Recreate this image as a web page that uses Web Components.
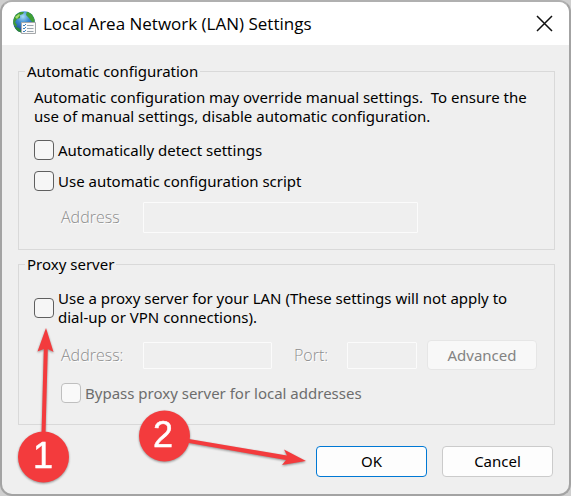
<!DOCTYPE html>
<html lang="en">
<head>
<meta charset="utf-8">
<title>Local Area Network (LAN) Settings</title>
<style>
  body {
    margin: 0;
    background: #cfcfcf;
    font: 15px/19px "Noto Sans", "Open Sans", sans-serif;
    color: #000;
  }

  .stack {
    display: flex;
    flex-direction: column;
    gap: 11px;
    align-items: flex-start;
  }

  .proxy {
    gap: 13px;
    padding: 8px 0 5px;
  }

  .note {
    margin: 0 0 3px;
  }

  .indent {
    display: flex;
    align-items: center;
    align-self: stretch;
    padding-left: 27px;
  }
</style>
</head>
<body>

<dialog-window>
  <network-icon slot="icon"></network-icon>
  <span slot="title">Local Area Network (LAN) Settings</span>

  <group-box>
    <span slot="legend">Automatic configuration</span>
    <div class="stack">
      <p class="note">Automatic configuration may override manual settings.&nbsp; To ensure the<br>use of manual settings, disable automatic configuration.</p>
      <check-option>Automatically detect settings</check-option>
      <check-option>Use automatic configuration script</check-option>
      <div class="indent">
        <text-field style="--label-width: 82px; --field-width: 275px; --field-height: 31px">Address</text-field>
      </div>
    </div>
  </group-box>

  <group-box>
    <span slot="legend">Proxy server</span>
    <div class="stack proxy">
      <check-option>Use a proxy server for your LAN (These settings will not apply to<br>dial-up or VPN connections).</check-option>
      <div class="indent" style="gap: 10px">
        <text-field style="--label-width: 82px; --field-width: 129px; --field-height: 27px; margin-right: 12px">Address:</text-field>
        <text-field style="--label-width: 53px; --field-width: 70px; --field-height: 27px">Port:</text-field>
        <push-button disabled>Advanced</push-button>
      </div>
      <div class="indent">
        <check-option disabled>Bypass proxy server for local addresses</check-option>
      </div>
    </div>
  </group-box>

  <push-button slot="actions" primary>OK</push-button>
  <push-button slot="actions">Cancel</push-button>

  <step-marks slot="overlay"></step-marks>
</dialog-window>

<script>
  // Shared base: clones the template into an open root
  class BaseElement extends HTMLElement {
    get template() {
      let t = document.createElement("template");
      t.innerHTML = this.markup;
      return t;
    }

    constructor() {
      super();
      this.attachShadow({ mode: "open" });
      this.shadowRoot.append(this.template.content.cloneNode(true));
    }
  }

  // Window frame, title bar, body and action row
  class DialogWindow extends BaseElement {
    get markup() {
      return `
      <style>
        :host {
          display: flex;
          flex-direction: column;
          position: relative;
          box-sizing: border-box;
          min-height: 100vh;
          border: 2px solid #a3a3a3;
          border-top-color: #b0b0b0;
          border-radius: 12px;
          background: #efefef;
          overflow: hidden;
        }

        header {
          display: flex;
          align-items: center;
          gap: 6px;
          height: 43px;
          padding: 0 14px 0 10px;
          background: #fff;
        }

        h1 {
          flex: 1;
          margin: 0;
          font: 17px/22px "Open Sans", "Noto Sans", sans-serif;
        }

        button {
          display: flex;
          padding: 2px;
          border: 0;
          background: none;
        }

        main {
          display: flex;
          flex-direction: column;
          gap: 5px;
          padding: 17px 14px 0 16px;
        }

        footer {
          display: flex;
          justify-content: flex-end;
          gap: 15px;
          padding: 21px 16px 0;
        }
      </style>

      <header>
        <slot name="icon"></slot>
        <h1><slot name="title"></slot></h1>
        <button type="button" aria-label="Close">
          <svg width="17" height="17" viewBox="0 0 17 17" fill="none" stroke="#111" stroke-width="1.5">
            <path d="M1 1L16 16M16 1L1 16"/>
          </svg>
        </button>
      </header>
      <main><slot></slot></main>
      <footer><slot name="actions"></slot></footer>
      <slot name="overlay"></slot>
      `;
    }
  }

  // Globe with a checklist card
  class NetworkIcon extends BaseElement {
    get markup() {
      return `
      <style>
        :host { display: block; height: 26px; }
      </style>
      <svg width="25" height="24" viewBox="0 0 25 24">
        <defs>
          <radialGradient id="sea" cx=".45" cy=".25" r=".75">
            <stop offset="0" stop-color="#a9dcf5"/>
            <stop offset=".4" stop-color="#3f8bd0"/>
            <stop offset="1" stop-color="#123a8c"/>
          </radialGradient>
          <clipPath id="disc"><circle cx="12" cy="11" r="10.8"/></clipPath>
        </defs>
        <circle cx="12" cy="11" r="10.8" fill="url(#sea)"/>
        <g clip-path="url(#disc)">
          <path d="M1 9L3 4L8 1L12 1L11 3L8 4L8 7L5 8L3 11L5 14L4 16L1 13Z" fill="#3f9a35"/>
          <path d="M15 0L20 3L23 9L22 12L19 10L17 7L14 4Z" fill="#3f9f35"/>
          <path d="M3 6L7 3L8 4L5 8Z" fill="#a5dc6f"/>
          <path d="M4 16L7 17L9 20L9 23L4 21L2 17Z" fill="#2c8a35"/>
        </g>
        <path d="M9.5 11.5H23.5V22.5H9.5Z" fill="#fafafa" stroke="#a5a8aa"/>
        <path d="M15 14.5H21.5M15 17.5H21.5M15 20.5H21.5" stroke="#9aa4ad"/>
        <path d="M11 14L12 15L14 13M11 17L12 18L14 16M11 20L12 21L14 19" fill="none" stroke="#3d7fc0"/>
      </svg>
      `;
    }
  }

  class GroupBox extends BaseElement {
    get markup() {
      return `
      <style>
        :host { display: block; }

        fieldset {
          margin: 0;
          min-width: 0;
          padding: 7px 15px 16px;
          border: 1px solid #d9d9d9;
        }

        legend {
          margin-left: -9px;
          padding: 0 2px;
        }
      </style>
      <fieldset>
        <legend><slot name="legend"></slot></legend>
        <slot></slot>
      </fieldset>
      `;
    }
  }

  class CheckOption extends BaseElement {
    get markup() {
      return `
      <style>
        :host { display: block; }

        label {
          display: flex;
          align-items: center;
          gap: 4px;
        }

        input {
          appearance: none;
          flex: none;
          box-sizing: border-box;
          width: 20px;
          height: 20px;
          margin: 0;
          border: 1px solid #5f5f5f;
          border-radius: 4px;
          background: #f6f6f6;
        }

        :host([disabled]) { color: #6d6d6d; }

        :host([disabled]) input {
          border-color: #bfbfbf;
          background: #f9f9f9;
        }
      </style>
      <label><input type="checkbox"><span><slot></slot></span></label>
      `;
    }

    connectedCallback() {
      this.shadowRoot.querySelector("input").disabled = this.hasAttribute("disabled");
    }
  }

  // Unavailable text box with an etched label
  class TextField extends BaseElement {
    get markup() {
      return `
      <style>
        :host { display: block; }

        div {
          display: flex;
          align-items: center;
        }

        label {
          width: var(--label-width);
          font-size: 16px;
          font-family: "Open Sans", "Noto Sans", sans-serif;
          font-weight: 300;
          color: #8e8e8e;
          text-shadow: 1px 1px #fff;
        }

        input {
          box-sizing: border-box;
          width: var(--field-width);
          height: var(--field-height);
          border: 1px solid #fbfbfb;
          border-radius: 1px;
          background: #efefef;
          font: inherit;
        }
      </style>
      <div>
        <label for="field"><slot></slot></label>
        <input id="field" type="text" disabled>
      </div>
      `;
    }
  }

  class PushButton extends BaseElement {
    get markup() {
      return `
      <style>
        :host { display: block; }

        button {
          box-sizing: border-box;
          width: 111px;
          height: 31px;
          padding: 0;
          border: 1px solid #cbcbcb;
          border-radius: 4px;
          background: #fdfdfd;
          font: inherit;
          color: inherit;
        }

        :host([primary]) button { border-color: #0078d4; }

        :host([disabled]) button {
          width: 110px;
          height: 30px;
          border-color: #e6e6e6;
          background: #f8f8f8;
          color: #838383;
        }
      </style>
      <button type="button"><slot></slot></button>
      `;
    }

    connectedCallback() {
      this.shadowRoot.querySelector("button").disabled = this.hasAttribute("disabled");
    }
  }

  // Numbered marks with arrows, laid over the dialog
  class StepMarks extends BaseElement {
    get markup() {
      return `
      <style>
        svg {
          position: absolute;
          overflow: visible;
          pointer-events: none;
          filter: drop-shadow(0 1px 1px rgba(0, 0, 0, .4));
          fill: #f33b3d;
          stroke: none;
        }

        .first { left: 16px; bottom: 10px; }
        .second { right: 262px; bottom: 32px; }

        text {
          font: 36px "Liberation Sans", sans-serif;
          text-anchor: middle;
          fill: #fff;
          stroke: #fff;
          stroke-width: .5;
        }
      </style>
      <svg class="first" width="52" height="156" viewBox="0 0 52 156">
        <path d="M28 0L35.5 24L29.8 21L27.5 106H23.5L25.8 21L19.5 23.5Z"/>
        <circle cx="25.5" cy="129" r="25.5"/>
        <text x="25" y="140">1</text>
      </svg>
      <svg class="second" width="168" height="52" viewBox="0 0 168 52">
        <path d="M167 51L143 55L147 50L50 33V29L148 45.5L145 39.5Z"/>
        <circle cx="25.5" cy="26" r="25.5"/>
        <text x="24" y="37">2</text>
      </svg>
      `;
    }
  }

  customElements.define("dialog-window", DialogWindow);
  customElements.define("network-icon", NetworkIcon);
  customElements.define("group-box", GroupBox);
  customElements.define("check-option", CheckOption);
  customElements.define("text-field", TextField);
  customElements.define("push-button", PushButton);
  customElements.define("step-marks", StepMarks);
</script>
</body>
</html>
